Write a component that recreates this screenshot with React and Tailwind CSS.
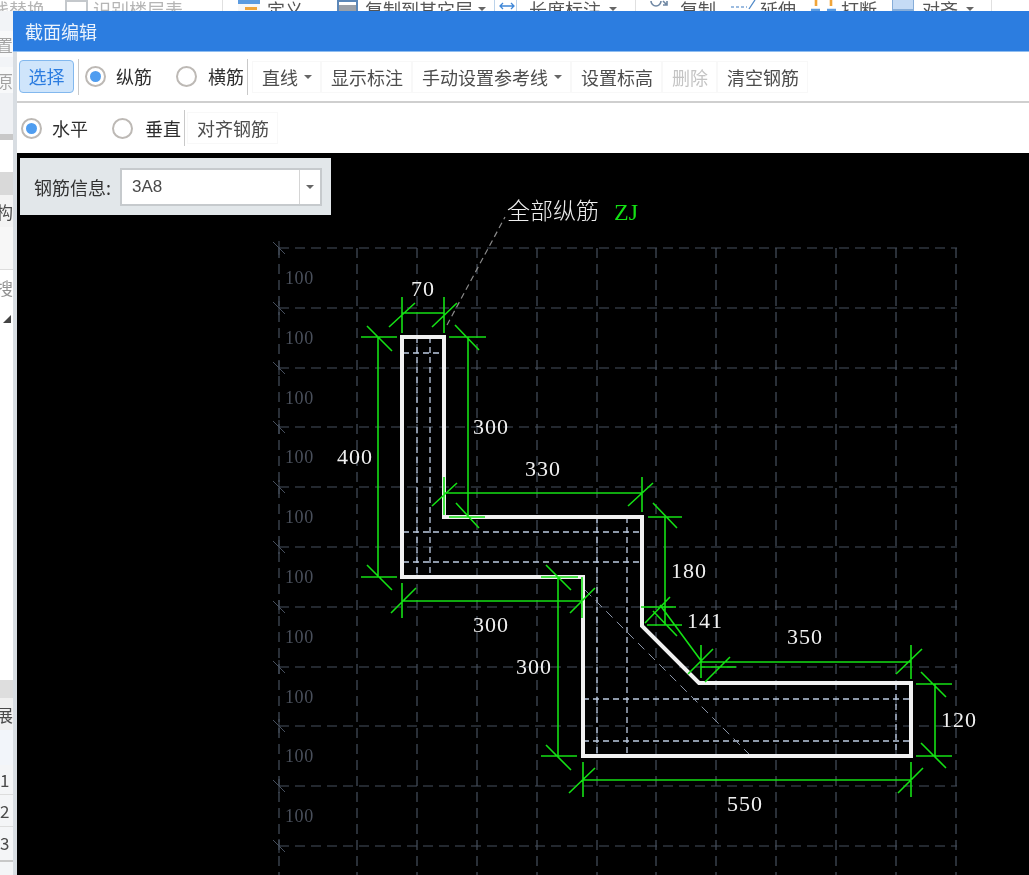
const CJK = { fontFamily: '"Noto Sans CJK SC", "Liberation Sans", sans-serif' };
const SERIF = '"Liberation Serif", serif';

const GRID_Y = [248, 308, 368, 427, 487, 547, 607, 667, 726, 786, 846];
const GRID_X = [279, 357, 417, 477, 537, 597, 656, 716, 776, 836, 896, 956];

const OUTLINE = "402,337 444,337 444,517 642,517 642,626 699,683 911,683 911,756 583,756 583,577 402,577";

const REBAR = [
  [417, 337, 417, 577], [430, 337, 430, 577], [403, 353, 444, 353],
  [403, 532, 641, 532], [403, 562, 641, 562], [597, 517, 597, 756], [627, 517, 627, 756],
  [583, 699, 911, 699], [583, 741, 911, 741], [896, 684, 896, 756],
];

const GREEN = [
  // 70
  [402, 313, 444, 313], [402, 297, 402, 333], [444, 297, 444, 333], [389, 327, 415, 303], [432, 327, 457, 303],
  // 400
  [378, 337, 378, 577], [361, 337, 397, 337], [367, 326, 392, 351], [361, 577, 397, 577], [367, 565, 392, 590],
  // 300 upper
  [468, 337, 468, 517], [449, 337, 486, 337], [455, 325, 479, 350], [449, 517, 485, 517], [456, 503, 479, 528],
  // 330
  [444, 493, 642, 493], [444, 477, 444, 515], [432, 506, 457, 483], [642, 477, 642, 512], [628, 506, 653, 483],
  // 180
  [665, 517, 665, 625], [648, 517, 682, 517], [653, 503, 677, 528], [647, 625, 682, 625], [653, 611, 677, 636],
  // 141
  [660, 605, 702, 662], [641, 607, 676, 607], [645, 623, 670, 597], [701, 645, 701, 678], [688, 674, 713, 649],
  // 350
  [701, 662, 911, 662], [911, 645, 911, 679], [896, 674, 922, 649], [701, 667, 736, 667], [705, 682, 730, 657],
  // 300 lower
  [558, 577, 558, 756], [541, 577, 578, 577], [546, 565, 571, 590], [541, 756, 577, 756], [546, 745, 571, 770],
  // 300 middle
  [402, 601, 582, 601], [402, 583, 402, 618], [391, 613, 416, 588], [582, 577, 582, 618], [570, 613, 595, 588],
  // 120
  [935, 684, 935, 756], [916, 684, 952, 684], [921, 672, 946, 697], [916, 756, 952, 756], [921, 743, 946, 768],
  // 550
  [583, 780, 911, 780], [583, 762, 583, 797], [911, 762, 911, 797], [569, 793, 595, 768], [898, 793, 923, 768],
];

const LABELS = [
  ["70", 411, 296], ["400", 337, 464], ["300", 473, 434], ["330", 525, 476], ["180", 671, 578], ["141", 687, 628],
  ["350", 787, 644], ["300", 473, 632], ["300", 516, 674], ["120", 941, 727], ["550", 727, 811],
];

function toPath(list) {
  return list.map(([a, b, c, d]) => `M${a} ${b}L${c} ${d}`).join("");
}

function Drawing() {
  return (
    <svg className="absolute inset-0 block" width="1012" height="722" viewBox="17 153 1012 722">
      <g stroke="#47505e" strokeWidth="1.2" strokeDasharray="10 6" fill="none">
        {GRID_Y.map((y) => <line key={y} x1="279" y1={y} x2="957" y2={y} />)}
        {GRID_X.map((x) => <line key={x} x1={x} y1="248" x2={x} y2="875" />)}
      </g>
      <g stroke="#47505e" strokeWidth="1" fill="none">
        {GRID_Y.map((y) => <path key={y} d={`M273 ${y - 6}L285 ${y + 6}M279 ${y - 7}L279 ${y + 7}`} />)}
      </g>
      <g fill="#4a505c" fontFamily={SERIF} fontSize="18" letterSpacing="0.6">
        {GRID_Y.slice(0, 10).map((y) => <text key={y} x="285" y={y + 36}>100</text>)}
      </g>
      <path d={toPath(REBAR)} stroke="#bccae0" strokeWidth="1.3" strokeDasharray="6 4" fill="none" />
      <path d="M585 590L750 755" stroke="#8b95a8" strokeWidth="1" strokeDasharray="9 6" fill="none" />
      <path d="M447 325L505 217" stroke="#8a8a8a" strokeWidth="1.2" strokeDasharray="6 4" fill="none" />
      <polygon points={OUTLINE} fill="none" stroke="#f1f1f1" strokeWidth="4" />
      <path d={toPath(GREEN)} stroke="#14e014" strokeWidth="1.6" fill="none" />
      <g fill="#f0f0f0" fontFamily={SERIF} fontSize="22" letterSpacing="1">
        {LABELS.map(([t, x, y]) => <text key={`${t}${x}`} x={x} y={y}>{t}</text>)}
      </g>
      <text x="507" y="219" fill="#eeeeee" fontSize="23" fontFamily='"Noto Sans CJK SC", sans-serif' fontWeight="300">全部纵筋</text>
      <text x="614" y="220" fill="#14e014" fontSize="24" fontFamily={SERIF}>ZJ</text>
    </svg>
  );
}

function Caret({ className = "" }) {
  return <span className={`inline-block w-0 h-0 border-x-[4px] border-x-transparent border-t-[4px] border-t-[#666666] ${className}`} />;
}

function Radio({ on, className = "" }) {
  return (
    <span className={`w-[21px] h-[21px] shrink-0 rounded-full border-2 border-[#bdb9b5] bg-white flex items-center justify-center ${className}`}>
      {on && <span className="w-[11px] h-[11px] rounded-full bg-[#4f9df0]" />}
    </span>
  );
}

function Sep({ className = "" }) {
  return <span className={`w-px h-[36px] shrink-0 bg-[#c9c9c9] ${className}`} />;
}

function Btn({ children, caret, muted }) {
  return (
    <span className={`h-[32px] pl-[9px] pr-[8px] flex items-center shrink-0 border border-[#f8f8f8] text-[18px] leading-none ${muted ? "text-[#c4c4c4]" : "text-[#4d4d4d]"}`}>
      {children}
      {caret && <Caret className="ml-[6px]" />}
    </span>
  );
}

function Ribbon() {
  return (
    <div className="h-[11px] overflow-hidden bg-white flex items-start text-[18px] leading-[18px] text-[#555555] whitespace-nowrap">
      <span className="w-[45px] flex justify-end overflow-hidden shrink-0 text-[#b5b5b5]"><span className="shrink-0">线替换</span></span>
      <span className="ml-[20px] w-[23px] h-[18px] border-2 border-[#c4c8cc] shrink-0" />
      <span className="ml-[5px] w-[90px] shrink-0 text-[#b5b5b5]">识别楼层表</span>
      <span className="ml-[39px] w-px h-[11px] bg-[#e0e0e0] shrink-0" />
      <span className="ml-[15px] w-[22px] h-[18px] shrink-0 bg-[#f7f7f7] flex flex-col">
        <span className="h-[4px] bg-[#5b9be0]" />
        <span className="mt-[3px] ml-[7px] w-[12px] h-[3px] bg-[#f0a53a]" />
      </span>
      <span className="ml-[7px] w-[36px] shrink-0">定义</span>
      <span className="ml-[34px] w-[21px] h-[18px] border-2 border-[#5b87b8] bg-white shrink-0 flex flex-col justify-end">
        <span className="h-[7px] mb-[4px] bg-[#9aa0a8]" />
      </span>
      <span className="ml-[7px] w-[108px] shrink-0">复制到其它层</span>
      <Caret className="ml-[5px] mt-[7px] shrink-0" />
      <span className="ml-[8px] w-px h-[11px] bg-[#bcd3ea] shrink-0" />
      <svg className="ml-[4px] shrink-0" width="16" height="11" viewBox="0 0 16 11"><path d="M1 6H15M4 3L1 6L4 9M12 3L15 6L12 9" stroke="#3f87d8" strokeWidth="1.3" fill="none" /></svg>
      <span className="ml-[1px] w-px h-[11px] bg-[#bcd3ea] shrink-0" />
      <span className="ml-[12px] w-[72px] shrink-0">长度标注</span>
      <Caret className="ml-[8px] mt-[7px] shrink-0" />
      <span className="ml-[18px] w-px h-[11px] bg-[#e0e0e0] shrink-0" />
      <svg className="ml-[13px] shrink-0" width="22" height="11" viewBox="0 0 22 11"><path d="M2 1A5 5 0 0 0 12 1M14 1L18 5M18 1V5H14" stroke="#6f87a3" strokeWidth="1.6" fill="none" /></svg>
      <span className="ml-[9px] w-[36px] shrink-0">复制</span>
      <svg className="ml-[15px] shrink-0" width="26" height="11" viewBox="0 0 26 11"><path d="M0 7H16" stroke="#7da6d6" strokeWidth="1.3" strokeDasharray="3 2" fill="none" /><path d="M18 9L24 0" stroke="#4e88c8" strokeWidth="1.3" fill="none" /></svg>
      <span className="ml-[3px] w-[36px] shrink-0">延伸</span>
      <svg className="ml-[15px] shrink-0" width="25" height="11" viewBox="0 0 25 11"><path d="M5 0V6M20 0V6" stroke="#f0a53a" strokeWidth="2.6" fill="none" /><path d="M0 10H9M16 10H25" stroke="#5b9be0" strokeWidth="2.4" fill="none" /></svg>
      <span className="ml-[5px] w-[36px] shrink-0">打断</span>
      <span className="ml-[15px] w-[22px] h-[11px] bg-[#c5dbf5] border-x border-b-2 border-[#86add9] shrink-0" />
      <span className="ml-[8px] w-[36px] shrink-0">对齐</span>
      <Caret className="ml-[8px] mt-[7px] shrink-0" />
      <span className="ml-[17px] w-px h-[11px] bg-[#e0e0e0] shrink-0" />
    </div>
  );
}

function Strip({ h, bg, children, className = "" }) {
  return (
    <div className={`flex justify-end items-center overflow-hidden ${h} ${bg} ${className}`}>
      {children && <span className="shrink-0 text-[17px] leading-none text-[#4a4a4a]">{children}</span>}
    </div>
  );
}

function Digit({ h, children, line }) {
  return (
    <div className={`flex items-center bg-[#f4f5f7] ${h} ${line ? "border-b border-[#dddddd]" : ""}`}>
      <span className="text-[17px] leading-none text-[#4a4a4a]">{children}</span>
    </div>
  );
}

function LeftStrip() {
  return (
    <div className="w-[13px] flex flex-col h-[864px]" style={CJK}>
      <Strip h="h-[20px]" bg="bg-[#f2f4f7]" />
      <Strip h="h-[26px]" bg="bg-[#f2f4f7]" className="opacity-50">置</Strip>
      <Strip h="h-[10px]" bg="bg-[#f2f4f7]" />
      <Strip h="h-[26px]" bg="bg-[#f2f4f7]" className="opacity-50">原</Strip>
      <Strip h="h-[41px]" bg="bg-[#eff1f4]" />
      <Strip h="h-[6px]" bg="bg-[#c8c8c8]" />
      <Strip h="h-[32px]" bg="bg-white" />
      <Strip h="h-[23px]" bg="bg-[#d9d9d9]" />
      <Strip h="h-[32px]" bg="bg-[#f3f3f3]">构</Strip>
      <Strip h="h-[43px]" bg="bg-[#f7f7f7]" className="border-b border-[#dddddd]" />
      <Strip h="h-[35px]" bg="bg-white" className="opacity-60">搜</Strip>
      <div className="h-[375px] bg-white pt-[9px] pl-[2px]">
        <svg width="10" height="10" viewBox="0 0 10 10" className="block"><path d="M1 9L9 1V9Z" fill="#444444" /></svg>
      </div>
      <Strip h="h-[18px]" bg="bg-[#dedede]" />
      <Strip h="h-[32px]" bg="bg-[#f0f0f0]">展</Strip>
      <Strip h="h-[35px]" bg="bg-[#f2f5fa]" />
      <Digit h="h-[30px]" line>1</Digit>
      <Digit h="h-[32px]" line>2</Digit>
      <Digit h="h-[30px]">3</Digit>
      <Strip h="h-[3px]" bg="bg-[#f4f5f7]" />
      <Strip h="h-[2px]" bg="bg-[#c8c8c8]" />
      <Strip h="h-[13px]" bg="bg-[#f4f5f7]" />
    </div>
  );
}

function Dialog() {
  return (
    <div className="absolute left-[13px] top-[11px] w-[1016px] h-[864px] bg-[#d8dde2] flex flex-col overflow-hidden">
      <div className="h-[40px] shrink-0 bg-[#2c7de0] border-b border-[#8fbdf0] box-content flex items-center pl-[12px] text-[18px] text-white/90 leading-none">截面编辑</div>
      <div className="ml-[4px] flex-1 flex flex-col min-h-0">
        <div className="h-[49px] shrink-0 bg-white flex items-center text-[#2e2e2e]">
          <span className="ml-[2px] w-[55px] h-[33px] shrink-0 rounded-[4px] border border-[#82b8ee] bg-[#cfe5fb] text-[#2c7de0] text-[18px] flex items-center justify-center">选择</span>
          <Sep className="ml-[4px]" />
          <Radio on className="ml-[6px]" />
          <span className="ml-[10px] w-[37px] text-[18px] shrink-0">纵筋</span>
          <Radio className="ml-[23px]" />
          <span className="ml-[11px] w-[37px] text-[18px] shrink-0">横筋</span>
          <Sep className="ml-[2px]" />
          <span className="ml-[4px] flex items-center">
            <Btn caret>直线</Btn>
            <Btn>显示标注</Btn>
            <Btn caret>手动设置参考线</Btn>
            <Btn>设置标高</Btn>
            <Btn muted>删除</Btn>
            <Btn>清空钢筋</Btn>
          </span>
        </div>
        <div className="h-[2px] shrink-0 bg-[#cfcfcf]" />
        <div className="h-[50px] shrink-0 bg-white flex items-center text-[#2e2e2e]">
          <Radio on className="ml-[4px]" />
          <span className="ml-[10px] w-[37px] text-[18px] shrink-0">水平</span>
          <Radio className="ml-[23px]" />
          <span className="ml-[12px] w-[37px] text-[18px] shrink-0">垂直</span>
          <Sep className="ml-[2px]" />
          <span className="ml-[2px]"><Btn>对齐钢筋</Btn></span>
        </div>
        <div className="relative flex-1 bg-black">
          <Drawing />
          <div className="absolute left-[3px] top-[5px] w-[311px] h-[57px] bg-[#e2e7ea] flex items-center pl-[14px]">
            <span className="w-[86px] shrink-0 text-[18px] text-[#333333] leading-none">钢筋信息:</span>
            <div className="w-[202px] h-[38px] bg-white border-2 border-[#c6cacd] flex items-center">
              <span className="flex-1 pl-[10px] text-[17px] text-[#4a4a4a]" style={{ fontFamily: '"Liberation Sans", sans-serif' }}>3A8</span>
              <span className="w-[21px] h-full border-l border-[#d5d5d5] flex items-center justify-center"><Caret /></span>
            </div>
          </div>
        </div>
      </div>
    </div>
  );
}

export default function App() {
  return (
    <div className="relative w-[1029px] h-[875px] overflow-hidden bg-white blur-[0.4px]" style={CJK}>
      <Ribbon />
      <LeftStrip />
      <Dialog />
    </div>
  );
}
